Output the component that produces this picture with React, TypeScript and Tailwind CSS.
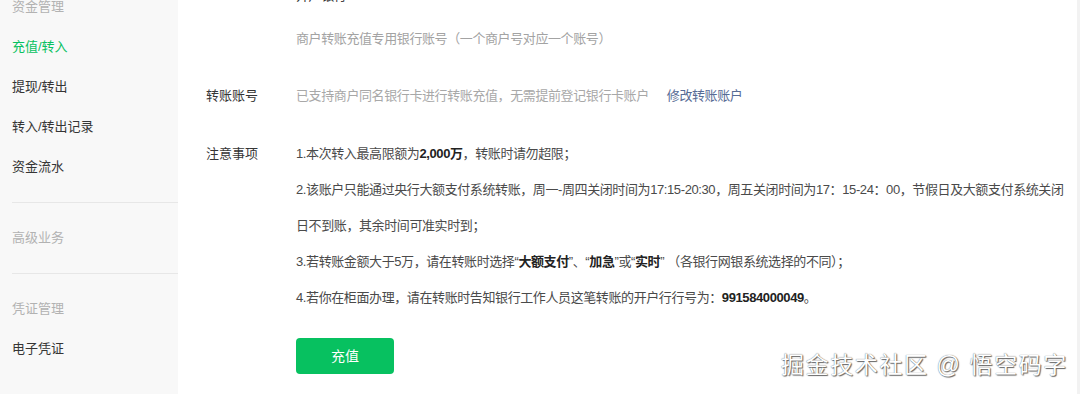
import React from "react";

const groups = [
  { title: "资金管理", items: ["充值/转入", "提现/转出", "转入/转出记录", "资金流水"], active: "充值/转入" },
  { title: "高级业务", items: [] as string[], active: "" },
  { title: "凭证管理", items: ["电子凭证"], active: "" },
];

const Sidebar = () => (
  <aside className="w-[178px] shrink-0 bg-[#f8f8f8] pl-3">
    {groups.map((group, index) => (
      <div
        key={group.title}
        className={`${index === 0 ? "-mt-[13px] pb-[15px]" : "py-[15px]"} ${
          index < groups.length - 1 ? "border-b border-[#e7e7e7]" : ""
        }`}
      >
        <p className="h-10 leading-10 text-[#b2b2b2]">{group.title}</p>
        {group.items.map((item) => (
          <p
            key={item}
            className={`h-10 leading-10 ${item === group.active ? "text-[#07c160]" : "text-[#353535]"}`}
          >
            {item}
          </p>
        ))}
      </div>
    ))}
  </aside>
);

const Row = ({ label, children, className = "" }: { label?: string; children: React.ReactNode; className?: string }) => (
  <div className={`flex ${className}`}>
    <div className="w-[90px] shrink-0 text-[#353535]">{label}</div>
    <div className="flex-1 tracking-[-0.4px]">{children}</div>
  </div>
);

const App = () => {
  return (
    <div
      className="relative flex h-[394px] w-[1080px] overflow-hidden bg-white text-[13px] leading-[36px]"
      style={{ fontFamily: '"Liberation Sans", "Noto Sans CJK SC", sans-serif' }}
    >
      <Sidebar />
      <main className="flex-1 pl-7">
        <Row className="-mt-[22px] text-[#353535]">开户银行</Row>
        <Row className="mt-[7px]">
          <span className="text-[#a3a3a3]">商户转账充值专用银行账号（一个商户号对应一个账号）</span>
        </Row>
        <Row label="转账账号" className="mt-[21px]">
          <span className="text-[#a8a8a8]">已支持商户同名银行卡进行转账充值，无需提前登记银行卡账户</span>
          <a className="ml-[18px] text-[#576b95]">修改转账账户</a>
        </Row>
        <Row label="注意事项" className="mt-[22px]">
          <div className="whitespace-nowrap text-[#4a4a4a]">
            <p>
              1.本次转入最高限额为<b className="text-[#222]">2,000万</b>，转账时请勿超限；
            </p>
            <p>
              2.该账户只能通过央行大额支付系统转账，周一-周四关闭时间为17:15-20:30，周五关闭时间为17：15-24：00，节假日及大额支付系统关闭
              <br />
              日不到账，其余时间可准实时到；
            </p>
            <p>
              3.若转账金额大于5万，请在转账时选择“<b className="text-[#222]">大额支付</b>”、“
              <b className="text-[#222]">加急</b>”或“<b className="text-[#222]">实时</b>”&nbsp;（各银行网银系统选择的不同）；
            </p>
            <p>
              4.若你在柜面办理，请在转账时告知银行工作人员这笔转账的开户行行号为：
              <b className="text-[#222]">991584000049</b>。
            </p>
          </div>
        </Row>
        <Row className="mt-[22px]">
          <button className="h-9 w-[98px] rounded-[4px] bg-[#07c160] text-[14px] tracking-normal text-white">充值</button>
        </Row>
      </main>
      <div className="w-[3px] shrink-0 bg-[#f2f2f2]" />
      <div
        className="absolute left-[781px] top-[348px] text-[23px] leading-[34px] tracking-[1.6px] text-white"
        style={{ textShadow: "0 0 1px #555, 1px 1px 1px #666" }}
      >
        掘金技术社区 @ 悟空码字
      </div>
    </div>
  );
};

export default App;
